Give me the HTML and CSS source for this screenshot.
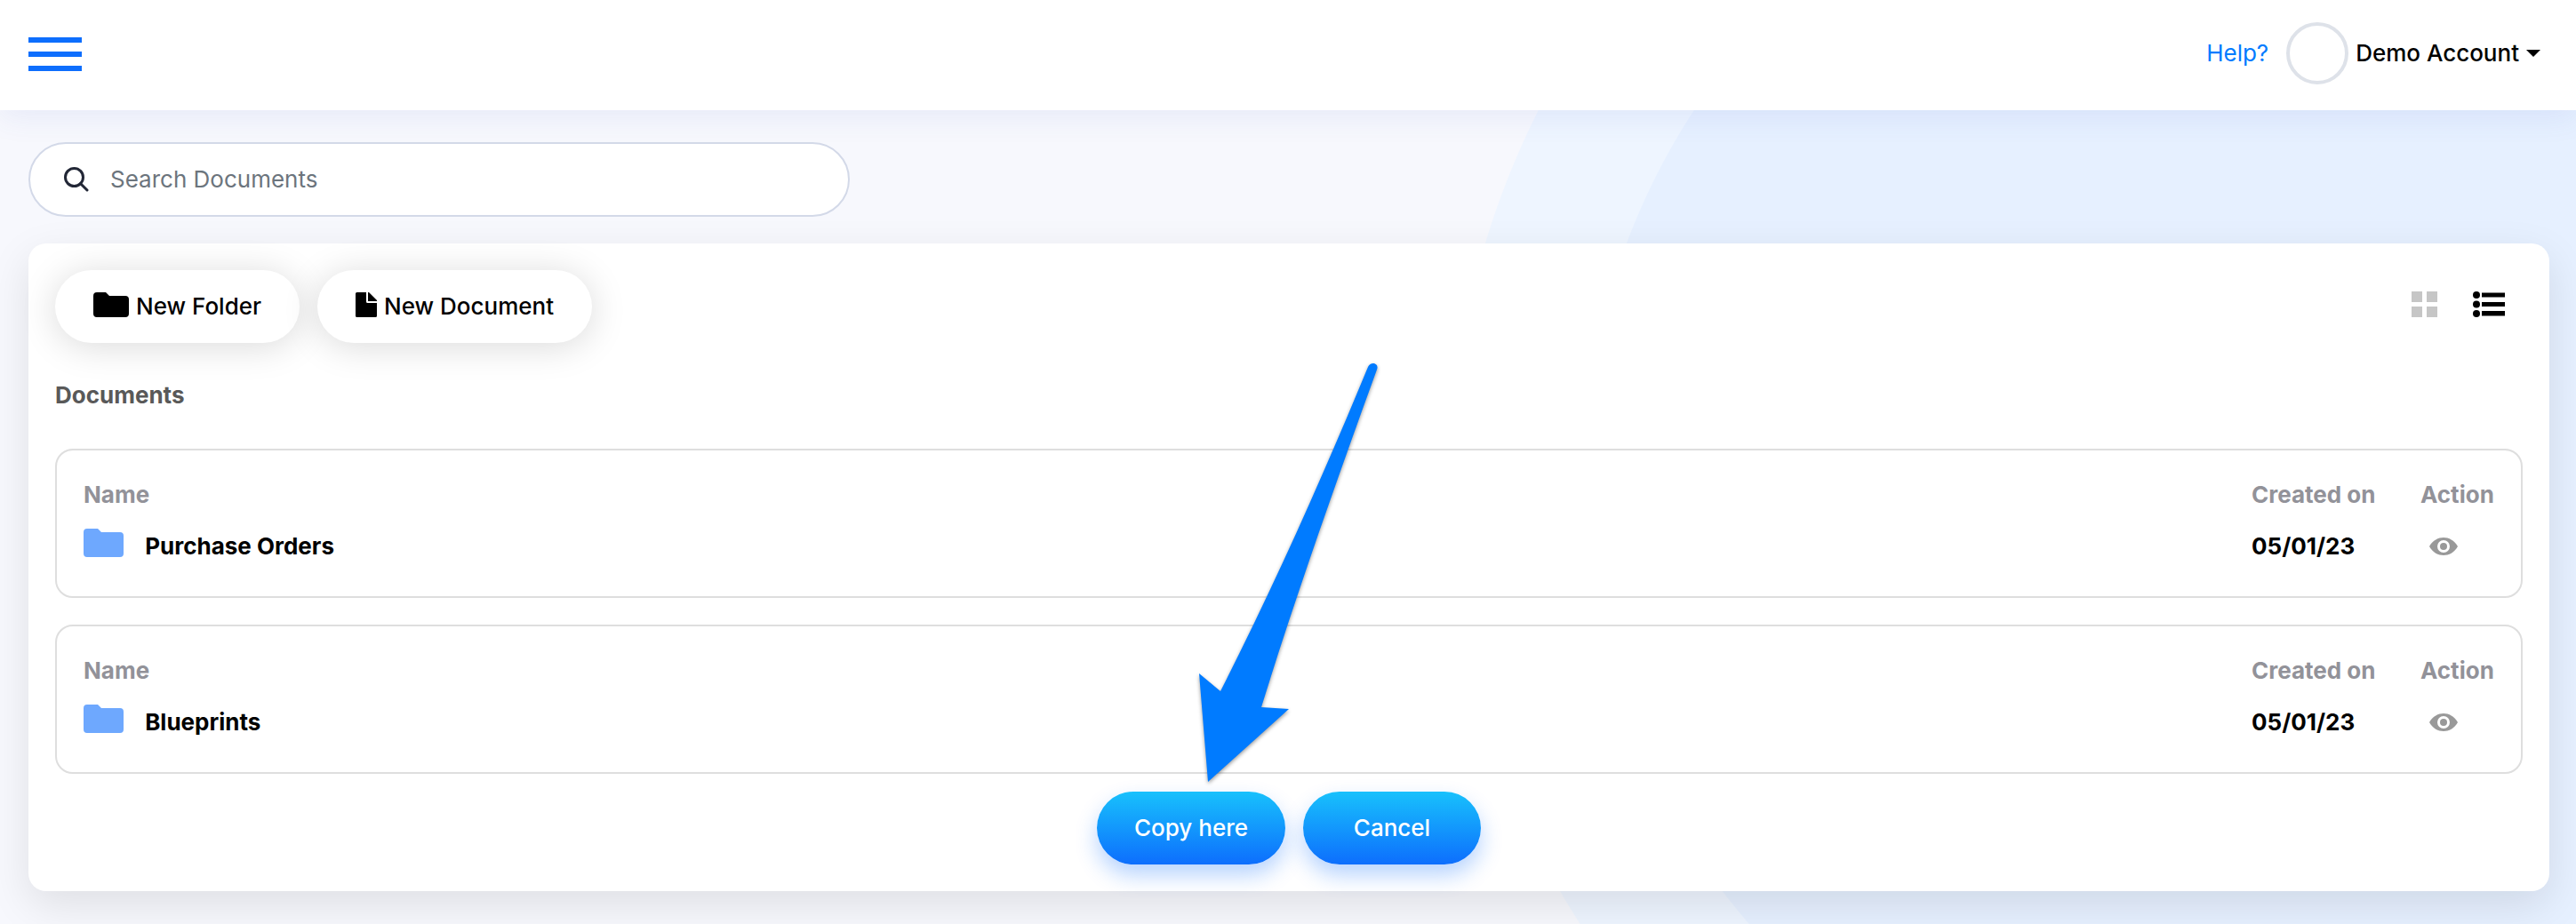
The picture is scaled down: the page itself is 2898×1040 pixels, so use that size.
FILE: index.html
```html
<!DOCTYPE html>
<html lang="en">
<head>
    <meta charset="UTF-8">
    <meta name="viewport" content="width=device-width, initial-scale=1.0">
    <title>Documents</title>
    <link rel="stylesheet" href="styles.css">
</head>
<body>
    <header class="topbar">
        <button class="menu-toggle" type="button" aria-label="Menu">
            <span></span>
            <span></span>
            <span></span>
        </button>
        <div class="account">
            <a href="#" class="help">Help?</a>
            <button class="account-menu" type="button">
                <span class="avatar"></span>
                <span>Demo Account</span>
                <span class="caret"></span>
            </button>
        </div>
    </header>

    <main class="content">
        <form class="search">
            <label for="search" aria-label="Search Documents">
                <svg width="28" height="28" viewBox="0 0 28 28" fill="none" stroke="#222736" stroke-width="3" stroke-linecap="round">
                    <circle cx="11.5" cy="11.5" r="10"/>
                    <path d="M18.5 18.5L26 26"/>
                </svg>
            </label>
            <input type="text" id="search" placeholder="Search Documents">
        </form>

        <section class="panel">
            <div class="toolbar">
                <button class="btn btn-light" type="button">
                    <svg width="40" height="28" viewBox="0 0 40 28">
                        <path d="M4 0H14L18 4H36A4 4 0 0 1 40 8V24A4 4 0 0 1 36 28H4A4 4 0 0 1 0 24V4A4 4 0 0 1 4 0Z"/>
                    </svg>
                    New Folder
                </button>
                <button class="btn btn-light" type="button">
                    <svg width="24" height="28" viewBox="0 0 24 28">
                        <path d="M1.5 0H12V10.5A1.5 1.5 0 0 0 13.5 12H24V26.5A1.5 1.5 0 0 1 22.5 28H1.5A1.5 1.5 0 0 1 0 26.5V1.5A1.5 1.5 0 0 1 1.5 0Z"/>
                        <path d="M14 0H15L24 9V10H14Z"/>
                    </svg>
                    New Document
                </button>
                <div class="views">
                    <button type="button" aria-label="Grid view">
                        <svg width="29" height="29" viewBox="0 0 29 29" fill="#c6c6c6">
                            <path d="M0 0H12V12H0ZM17 0H29V12H17ZM0 17H12V29H0ZM17 17H29V29H17Z"/>
                        </svg>
                    </button>
                    <button type="button" aria-label="List view">
                        <svg width="36" height="29" viewBox="0 0 36 29">
                            <circle cx="4" cy="4" r="4"/>
                            <circle cx="4" cy="14.5" r="4"/>
                            <circle cx="4" cy="25" r="4"/>
                            <path d="M10 1.5H36V6.5H10ZM10 12H36V17H10ZM10 22H36V27.5H10Z"/>
                        </svg>
                    </button>
                </div>
            </div>

            <h2>Documents</h2>

            <table class="document">
                <thead>
                    <tr>
                        <th class="name">Name</th>
                        <th class="created">Created on</th>
                        <th class="action">Action</th>
                    </tr>
                </thead>
                <tbody>
                    <tr>
                        <td class="name">
                            <svg class="folder" width="45" height="32" viewBox="0 0 45 32" fill="#6ea8fe">
                                <path d="M4 0H16L20 4H41A4 4 0 0 1 45 8V28A4 4 0 0 1 41 32H4A4 4 0 0 1 0 28V4A4 4 0 0 1 4 0Z"/>
                            </svg>
                            Purchase Orders
                        </td>
                        <td class="created">05/01/23</td>
                        <td class="action">
                            <button class="view" type="button" aria-label="View Purchase Orders">
                                <svg width="32" height="20" viewBox="0 0 32 20">
                                    <path fill="#999" fill-rule="evenodd" d="M0 10C4 3 10 0 16 0S28 3 32 10C28 17 22 20 16 20S4 17 0 10ZM16 3A7 7 0 1 0 16 17A7 7 0 1 0 16 3Z"/>
                                    <circle cx="16" cy="10" r="4" fill="#999"/>
                                </svg>
                            </button>
                        </td>
                    </tr>
                </tbody>
            </table>

            <table class="document">
                <thead>
                    <tr>
                        <th class="name">Name</th>
                        <th class="created">Created on</th>
                        <th class="action">Action</th>
                    </tr>
                </thead>
                <tbody>
                    <tr>
                        <td class="name">
                            <svg class="folder" width="45" height="32" viewBox="0 0 45 32" fill="#6ea8fe">
                                <path d="M4 0H16L20 4H41A4 4 0 0 1 45 8V28A4 4 0 0 1 41 32H4A4 4 0 0 1 0 28V4A4 4 0 0 1 4 0Z"/>
                            </svg>
                            Blueprints
                        </td>
                        <td class="created">05/01/23</td>
                        <td class="action">
                            <button class="view" type="button" aria-label="View Blueprints">
                                <svg width="32" height="20" viewBox="0 0 32 20">
                                    <path fill="#999" fill-rule="evenodd" d="M0 10C4 3 10 0 16 0S28 3 32 10C28 17 22 20 16 20S4 17 0 10ZM16 3A7 7 0 1 0 16 17A7 7 0 1 0 16 3Z"/>
                                    <circle cx="16" cy="10" r="4" fill="#999"/>
                                </svg>
                            </button>
                        </td>
                    </tr>
                </tbody>
            </table>

            <div class="actions">
                <button class="btn btn-primary" type="button">
                    Copy here
                    <!-- pointer to the copy button -->
                    <svg class="arrow" width="210" height="480" viewBox="1345 405 210 480" fill="#007bff">
                        <path d="M1359 880L1349 758L1373 778C1434 658 1489 534 1539 413C1542 406 1552 409 1549 416C1504 540 1456 676 1419 796L1450 798Z"/>
                    </svg>
                </button>
                <button class="btn btn-primary" type="button">Cancel</button>
            </div>
        </section>
    </main>
</body>
</html>
```

FILE: styles.css
```css
* {
    box-sizing: border-box;
}
body {
    font-family: Inter, "Liberation Sans", sans-serif;
    font-size: 26px;
    line-height: 40px;
    color: #000;
    margin: 0;
    min-height: 100vh;
    background-color: #f7f8fd;
    background-image:
        radial-gradient(circle at calc(100% - 355px) 541px, #e6f0ff 761px, transparent 762px),
        radial-gradient(circle at calc(100% - 341px) 541px, #eef5ff 925px, transparent 926px);
}
button, input {
    font: inherit;
    color: inherit;
}
button {
    border: none;
    background: none;
    padding: 0;
    cursor: pointer;
}
svg {
    display: block;
}
.topbar {
    display: flex;
    justify-content: space-between;
    align-items: center;
    padding: 20px 40px 24px 32px;
    height: 124px;
    background: #fff;
    box-shadow: 0 8px 32px rgba(70, 90, 200, 0.09);
}
.menu-toggle {
    display: flex;
    flex-direction: column;
    gap: 10px;
    width: 60px;
    padding-top: 2px;
}
.menu-toggle span {
    height: 6px;
    background: #0d6efd;
}
.account {
    display: flex;
    align-items: center;
    gap: 20px;
}
.help {
    color: #007bff;
    text-decoration: none;
}
.account-menu {
    display: flex;
    align-items: center;
    gap: 8px;
    font-weight: 500;
}
.avatar {
    width: 70px;
    height: 70px;
    border: 4px solid #dee2e9;
    border-radius: 50%;
}
.caret {
    border: 8px solid transparent;
    border-top-color: #000;
    border-bottom: 0;
}
.content {
    padding: 36px 30px 36px 32px;
}
.search {
    display: flex;
    align-items: center;
    gap: 24px;
    width: 924px;
    max-width: 100%;
    height: 84px;
    padding: 0 38px;
    margin-bottom: 30px;
    background: #fff;
    border: 2px solid #d3d9e8;
    border-radius: 42px;
}
.search input {
    flex: 1;
    border: none;
    outline: none;
    padding: 0;
    background: none;
}
.search input::placeholder {
    color: #6c757d;
    opacity: 1;
}
.panel {
    padding: 30px;
    background: #fff;
    border-radius: 20px;
    box-shadow: 0 16px 48px rgba(0, 0, 0, 0.1);
}
.toolbar {
    display: flex;
    gap: 20px;
}
.btn {
    display: flex;
    justify-content: center;
    align-items: center;
    height: 82px;
    padding: 0 42px;
    border-radius: 41px;
    font-weight: 500;
}
.btn-light {
    gap: 8px;
    padding: 0 43px;
    background: #fff;
    box-shadow: 0 4px 40px rgba(0, 0, 0, 0.15);
}
.btn-light svg {
    margin-bottom: 4px;
}
.views {
    display: flex;
    align-items: center;
    gap: 40px;
    margin-left: auto;
    padding: 0 20px 6px 0;
}
h2 {
    margin: 39px 0 40px;
    font-size: 26px;
    line-height: 40px;
    font-weight: 700;
    color: #595959;
}
.document {
    width: 100%;
    padding: 21px 30px 27px;
    border: 2px solid #dedede;
    border-radius: 20px;
    border-spacing: 0;
}
.document + .document {
    margin-top: 30px;
}
.document th,
.document td {
    padding: 0;
    height: 58px;
    text-align: left;
    font-weight: 700;
}
.document th {
    color: #929299;
}
.document .created {
    width: 190px;
}
.document .action {
    width: 83px;
}
.view {
    display: block;
    margin-left: 10px;
}
.folder {
    display: inline-block;
    margin-right: 18px;
    vertical-align: -3px;
}
.actions {
    display: flex;
    justify-content: center;
    gap: 20px;
    margin-top: 20px;
}
.btn-primary {
    position: relative;
    min-width: 200px;
    color: #fff;
    background: linear-gradient(#18c1fc, #0d6efd);
    box-shadow: 0 12px 24px rgba(13, 110, 253, 0.3);
}
.arrow {
    position: absolute;
    left: 111px;
    bottom: 88px;
    filter: drop-shadow(0 2px 2px rgba(0, 0, 0, 0.4));
    pointer-events: none;
}
```
